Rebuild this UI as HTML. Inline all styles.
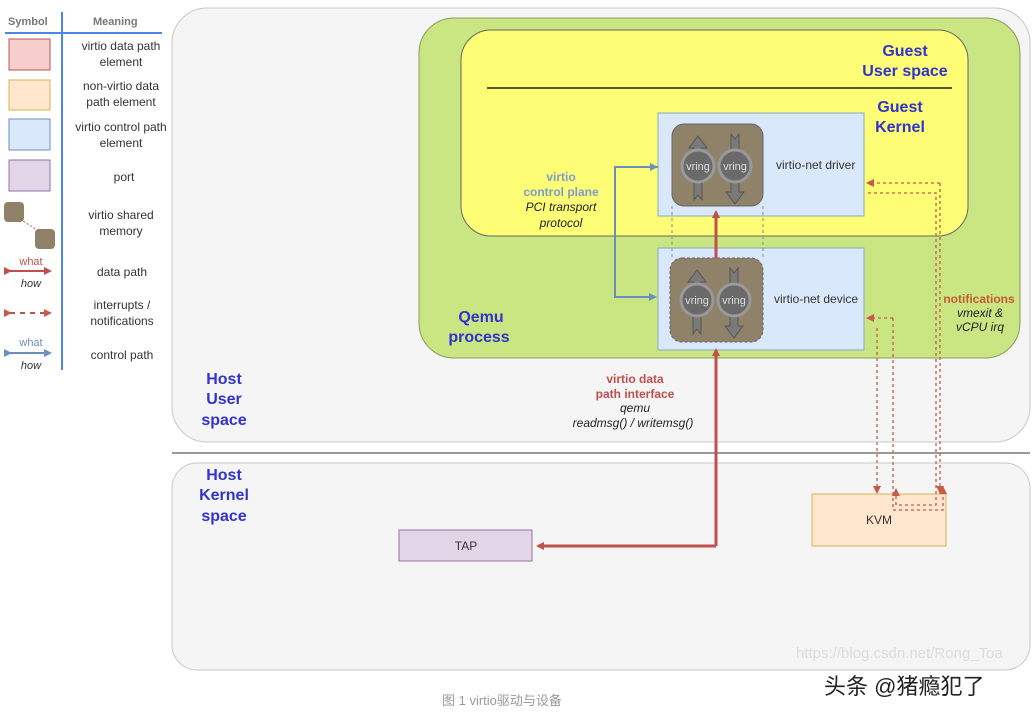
<!DOCTYPE html>
<html><head><meta charset="utf-8"><style>
body{margin:0;background:#fff;}
svg{display:block;font-family:"Liberation Sans","Noto Sans CJK SC",sans-serif;}
</style></head><body>
<svg width="1035" height="715" viewBox="0 0 1035 715" xmlns="http://www.w3.org/2000/svg">
<defs>
<marker id="ar" markerWidth="8" markerHeight="8" refX="6" refY="4" orient="auto" markerUnits="userSpaceOnUse"><path d="M0,0 L8,4 L0,8 z" fill="#c0504d"/></marker>
<marker id="ab" markerWidth="8" markerHeight="8" refX="6" refY="4" orient="auto" markerUnits="userSpaceOnUse"><path d="M0,0 L8,4 L0,8 z" fill="#6c8ebf"/></marker>
<marker id="ad" markerWidth="8" markerHeight="8" refX="6" refY="4" orient="auto" markerUnits="userSpaceOnUse"><path d="M0,0 L8,4 L0,8 z" fill="#c85a4a"/></marker>
<g id="vr">
<path d="M-19,-30 l-9,12 h5 v20 h8 v-20 h5 z" fill="#7a7a7a" stroke="#555" stroke-width="1"/>
<path d="M-23,12 v22 l4,-5 l4,5 v-22 z" fill="#7a7a7a" stroke="#555" stroke-width="1"/>
<path d="M14,-32 v22 h8 v-22 l-4,5 z" fill="#7a7a7a" stroke="#555" stroke-width="1"/>
<path d="M14,10 v16 h-5 l9,12 l9,-12 h-5 v-16 z" fill="#7a7a7a" stroke="#555" stroke-width="1"/>
<circle cx="-19" cy="0" r="16" fill="#6a6a6a" stroke="#999" stroke-width="3"/>
<circle cx="18" cy="0" r="16" fill="#6a6a6a" stroke="#999" stroke-width="3"/>
<text x="-19" y="4" font-size="11" fill="#ddd" text-anchor="middle">vring</text>
<text x="18" y="4" font-size="11" fill="#ddd" text-anchor="middle">vring</text>
</g>
</defs>
<text x="8" y="25" font-size="11" font-weight="bold" fill="#777">Symbol</text>
<text x="93" y="25" font-size="11" font-weight="bold" fill="#777">Meaning</text>
<line x1="5" y1="33" x2="162" y2="33" stroke="#4a86e8" stroke-width="2"/>
<line x1="62" y1="12" x2="62" y2="370" stroke="#4a86e8" stroke-width="2"/>
<rect x="9" y="39" width="41" height="31" fill="#f8cecc" stroke="#b85450"/>
<rect x="9" y="80" width="41" height="30" fill="#ffe6cc" stroke="#d6b656"/>
<rect x="9" y="119" width="41" height="31" fill="#dae8fc" stroke="#6c8ebf"/>
<rect x="9" y="160" width="41" height="31" fill="#e1d5e7" stroke="#9673a6"/>
<rect x="4" y="202" width="20" height="20" rx="4" fill="#8f8269"/>
<rect x="35" y="229" width="20" height="20" rx="4" fill="#8f8269"/>
<line x1="20" y1="219" x2="40" y2="232" stroke="#c85a4a" stroke-dasharray="2,2"/>
<g font-size="12" fill="#333" text-anchor="middle">
<text x="121" y="50">virtio data path</text><text x="121" y="66">element</text>
<text x="121" y="90">non-virtio data</text><text x="121" y="106">path element</text>
<text x="121" y="131">virtio control path</text><text x="121" y="147">element</text>
<text x="124" y="181">port</text>
<text x="121" y="219">virtio shared</text><text x="121" y="235">memory</text>
<text x="122" y="276">data path</text>
<text x="122" y="309">interrupts /</text><text x="122" y="325">notifications</text>
<text x="122" y="359">control path</text>
</g>
<text x="31" y="265" font-size="11" fill="#c0504d" text-anchor="middle">what</text>
<line x1="10" y1="271" x2="50" y2="271" stroke="#c0504d" stroke-width="2" marker-end="url(#ar)" marker-start="url(#ar)"/>
<text x="31" y="287" font-size="11" font-style="italic" fill="#333" text-anchor="middle">how</text>
<line x1="10" y1="313" x2="50" y2="313" stroke="#c0504d" stroke-width="2" stroke-dasharray="5,5" marker-end="url(#ad)" marker-start="url(#ad)"/>
<text x="31" y="346" font-size="11" fill="#6c8ebf" text-anchor="middle">what</text>
<line x1="10" y1="353" x2="50" y2="353" stroke="#6c8ebf" stroke-width="2" marker-end="url(#ab)" marker-start="url(#ab)"/>
<text x="31" y="369" font-size="11" font-style="italic" fill="#333" text-anchor="middle">how</text>
<rect x="172" y="8" width="858" height="434" rx="35" fill="#f5f5f5" stroke="#c8c8c8"/>
<line x1="172" y1="453" x2="1030" y2="453" stroke="#999" stroke-width="2"/>
<rect x="172" y="463" width="858" height="207" rx="25" fill="#f5f5f5" stroke="#c8c8c8"/>
<rect x="419" y="18" width="601" height="340" rx="35" fill="#cae683" stroke="#8a9a60"/>
<rect x="461" y="30" width="507" height="206" rx="30" fill="#fdfd76" stroke="#666"/>
<line x1="487" y1="88" x2="952" y2="88" stroke="#222" stroke-width="1.5"/>
<g font-size="16" font-weight="bold" fill="#3333cc" text-anchor="middle">
<text x="905" y="56">Guest</text><text x="905" y="76">User space</text>
<text x="900" y="112">Guest</text><text x="900" y="132">Kernel</text>
<text x="481" y="322">Qemu</text><text x="479" y="342">process</text>
<text x="224" y="384">Host</text><text x="224" y="404">User</text><text x="224" y="425">space</text>
<text x="224" y="480">Host</text><text x="224" y="500">Kernel</text><text x="224" y="521">space</text>
</g>
<rect x="658" y="113" width="206" height="103" fill="#dae8fc" stroke="#8ab"/>
<rect x="658" y="248" width="206" height="102" fill="#dae8fc" stroke="#8ab"/>
<line x1="672" y1="206" x2="672" y2="258" stroke="#888" stroke-dasharray="3,3"/>
<line x1="763" y1="206" x2="763" y2="258" stroke="#888" stroke-dasharray="3,3"/>
<rect x="672" y="124" width="91" height="82" rx="12" fill="#8f8269" stroke="#666"/>
<rect x="670" y="258" width="93" height="84" rx="12" fill="#8f8269" stroke="#666" stroke-dasharray="3,2"/>
<use href="#vr" x="717" y="166"/>
<use href="#vr" x="716" y="300"/>
<g font-size="12" fill="#333"><text x="776" y="169">virtio-net driver</text><text x="774" y="303">virtio-net device</text></g>
<path d="M658,167 H615 V297 H655" fill="none" stroke="#6c8ebf" stroke-width="2" marker-end="url(#ab)"/>
<line x1="640" y1="167" x2="656" y2="167" stroke="#6c8ebf" stroke-width="2" marker-end="url(#ab)"/>
<g font-size="12" text-anchor="middle">
<text x="561" y="181" fill="#7c9ccc" font-weight="bold">virtio</text>
<text x="561" y="196" fill="#7c9ccc" font-weight="bold">control plane</text>
<text x="561" y="211" font-style="italic" fill="#222">PCI transport</text>
<text x="561" y="227" font-style="italic" fill="#222">protocol</text>
<text x="635" y="383" fill="#c0504d" font-weight="bold">virtio data</text>
<text x="635" y="398" fill="#c0504d" font-weight="bold">path interface</text>
<text x="635" y="412" font-style="italic" fill="#222">qemu</text>
<text x="633" y="427" font-style="italic" fill="#222">readmsg() / writemsg()</text>
<text x="979" y="303" fill="#c85a30" font-weight="bold">notifications</text>
<text x="980" y="317" font-style="italic" fill="#222">vmexit &amp;</text>
<text x="980" y="331" font-style="italic" fill="#222">vCPU irq</text>
</g>
<line x1="716" y1="258" x2="716" y2="212" stroke="#c0504d" stroke-width="3" marker-end="url(#ar)"/>
<path d="M716,546 V350" fill="none" stroke="#c0504d" stroke-width="3" marker-end="url(#ar)"/>
<path d="M716,546 H538" fill="none" stroke="#c0504d" stroke-width="3" marker-end="url(#ar)"/>
<rect x="399" y="530" width="133" height="31" fill="#e1d5e7" stroke="#9673a6"/>
<text x="466" y="550" font-size="12" fill="#333" text-anchor="middle">TAP</text>
<rect x="812" y="494" width="134" height="52" fill="#ffe6cc" stroke="#d6b656"/>
<text x="879" y="524" font-size="12" fill="#333" text-anchor="middle">KVM</text>
<g fill="none" stroke="#c85a4a" stroke-width="1.3" stroke-dasharray="3,3">
<path d="M940,183 H868" marker-end="url(#ad)"/>
<path d="M940,183 V492" marker-end="url(#ad)"/>
<path d="M868,193 H936 V505 H896"/>
<path d="M893,318 H868" marker-end="url(#ad)"/>
<path d="M893,318 V510 H943 V488" marker-end="url(#ad)"/>
<path d="M877,328 V492" marker-end="url(#ad)"/>
<path d="M896,505 V490" marker-end="url(#ad)"/>
</g>
<text x="796" y="658" font-size="15" fill="#dcdcdc">https://blog.csdn.net/Rong_Toa</text>
<text x="824" y="694" font-size="22" fill="#222">头条 @猪瘾犯了</text>
<text x="442" y="705" font-size="13" fill="#999">图 1 virtio驱动与设备</text>
</svg>
</body></html>
